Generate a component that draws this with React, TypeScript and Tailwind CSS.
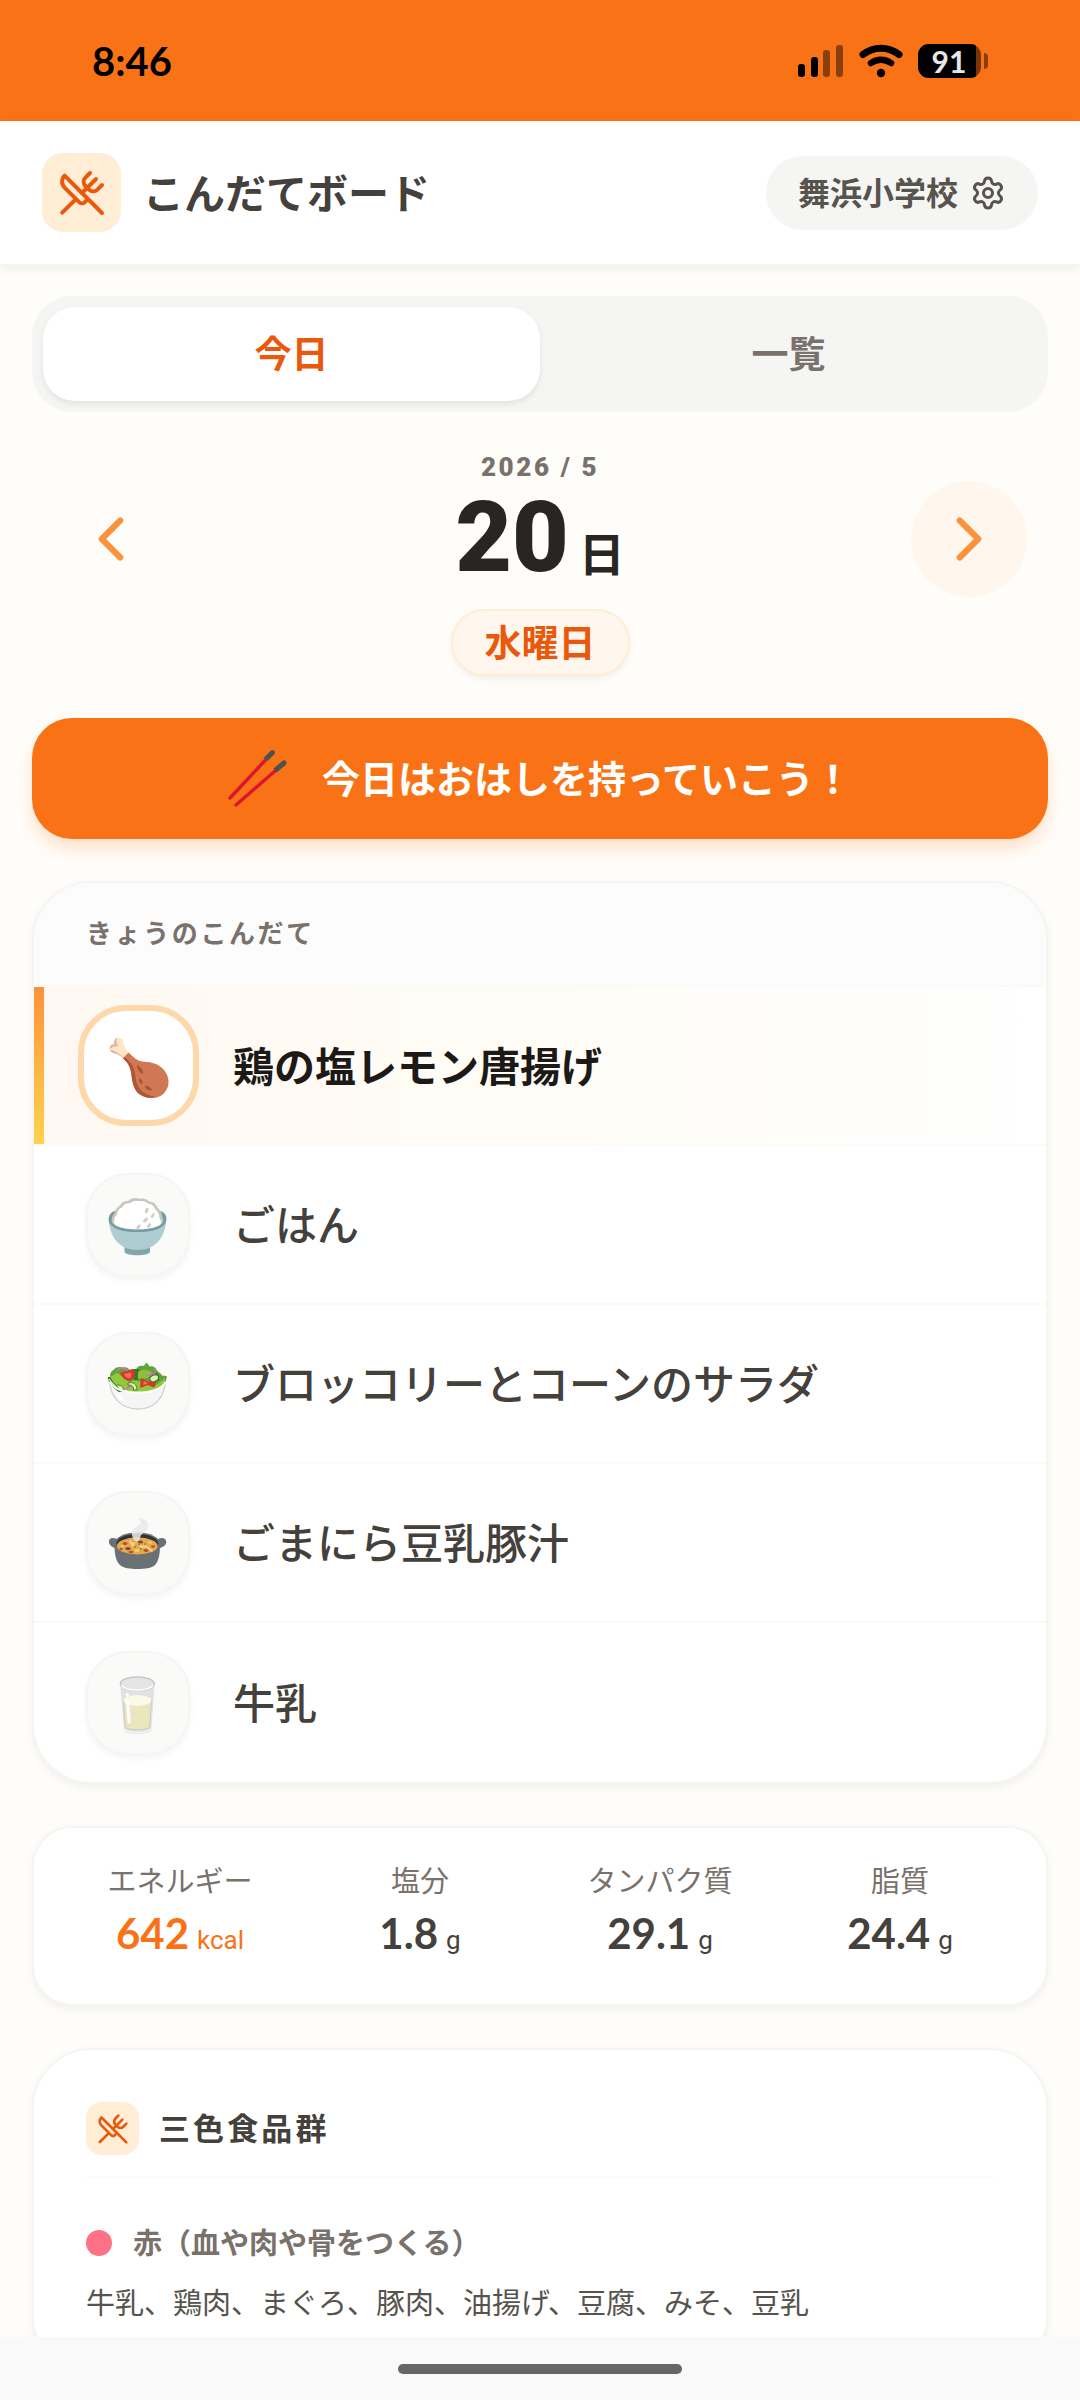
import { useState } from "react";
import type { ReactNode } from "react";
import { ChevronLeft, ChevronRight, Settings, UtensilsCrossed } from "lucide-react";

function SignalIcon() {
  return (
    <svg width="46" height="34" viewBox="0 0 46 34" aria-hidden="true">
      <rect x="0" y="20" width="7" height="13" rx="3" />
      <rect x="13" y="13" width="7" height="20" rx="3" />
      <rect x="25" y="6" width="7" height="27" rx="3" opacity="0.45" />
      <rect x="38" y="1" width="7" height="32" rx="3" opacity="0.45" />
    </svg>
  );
}

function WifiIcon() {
  return (
    <svg width="44" height="34" viewBox="0 0 44 34" fill="none" stroke="#000" strokeLinecap="round" aria-hidden="true">
      <path d="M4 10.5 C14.5 2 29.5 2 40 10.5" strokeWidth="7" />
      <path d="M12 19 C18 14.6 26 14.6 32 19" strokeWidth="6.5" />
      <circle cx="22" cy="29" r="4.2" fill="#000" stroke="none" />
    </svg>
  );
}

function StatusBar() {
  return (
    <div className="flex h-[121px] shrink-0 items-center justify-between bg-[#f97316] px-[92px] text-black">
      <span className="font-['Lato',sans-serif] text-[40px] leading-none font-bold">8:46</span>
      <div className="flex items-center gap-[15px]">
        <SignalIcon />
        <WifiIcon />
        <div className="flex items-center gap-[3px]" aria-label="バッテリー 91%">
          <div className="flex h-[34px] w-[63px] overflow-hidden rounded-[11px] bg-[#7c3508]">
            <span className="flex w-[58px] items-center justify-center bg-black pl-1 font-['Lato',sans-serif] text-[30px] leading-none font-bold text-[#e7e7e7]">
              91
            </span>
          </div>
          <div className="h-4 w-1 rounded-r-full bg-[#8a3f0c]" />
        </div>
      </div>
    </div>
  );
}

function DrumstickIcon() {
  return (
    <svg width="64" height="64" viewBox="0 0 64 64" className="overflow-visible" aria-hidden="true">
      <path
        d="M22 20 C19 15 16.5 12 16 8 C15.8 4.5 13 3.2 10.6 3.8 C8 4.5 7 7 7.4 10.4 C4.5 10 2.4 12 2.7 15 C3 18.2 6.5 19.2 9.5 20 C12.5 21 14.4 23 17 25.5 Z"
        fill="#fee6c4"
      />
      <path d="M7.4 10.4 C6.4 7 8 4.4 10.6 3.8 C8.6 6 9.6 9 11 12.3 C8 11.8 5 13 2.7 15.4 C2.4 12 4.5 10 7.4 10.4 Z M3 16 C6 16 11 17.5 17.6 25.2 C14 22.5 12.5 21 9.5 20 C6 19 3.6 18.6 3 16 Z" fill="#dcb8a4" />
      <path
        d="M21.6 18.6 C26 22.5 29 26.8 37 27.8 C45 28.2 52 30 57 36 C62.8 43 63 52 58 58 C53 64.5 43 66 35 61.5 C27 57 25.5 49 24.5 41 C23.6 33 21 28.5 16 24.5 C17.5 22.5 19.4 20.4 21.6 18.6 Z"
        fill="#d07754"
      />
      <path
        d="M17.2 23 C25 28.5 27.5 34 28.4 42 C29.4 51.5 33 60.5 49 62.7 C43 65 37 63.6 32 60 C26.5 55.5 25.3 48 24.5 41 C23.6 33 21 28.5 16 24.5 Z"
        fill="#ae5730"
      />
      <path d="M30.5 31.5 C34 33.5 35.5 36.5 35.6 39.5 C32.5 38.5 31 35.5 30.5 31.5 Z M32.5 44.5 C34.8 46 35.3 47.8 34.8 49.7 C32.8 48.8 32 46.8 32.5 44.5 Z M38 52.2 C41 52 43.6 53.5 44.4 56 C41.5 56.4 39 55 38 52.2 Z" fill="#ab5631" stroke="#ab5631" />
    </svg>
  );
}

function RiceIcon() {
  return (
    <svg width="64" height="64" viewBox="0 0 64 64" aria-hidden="true">
      <path d="M18.5 54 H44 V59 C42 63.4 20.5 63.4 18.5 59 Z" fill="#82a5ac" />
      <path d="M2.7 25 C3 41 11 57 31.5 57 C52 57 60 41 60.3 25 Z" fill="#aecdd3" />
      <path d="M2.7 26 C2.7 22 5 19 9 18 H54 C58 19 60.4 21.5 60.3 26 C60 34 50 39 31.5 39 C13 39 3 34.5 2.7 26 Z" fill="#749ba2" />
      <path
        d="M6 30 C5 26 6.5 22 8.5 20.5 C8.5 17.5 10.5 14.5 14 12.5 C15.5 9.5 19 7.4 22 8 C25 5.2 30 4 33.5 5.8 C37 4.8 41 6 43 8.4 C47 8.6 50.5 11 51.5 14.5 C54.5 17.5 55.8 20 56 23 C57.5 26 57.3 28 57 30 C50 39 13 39 6 30 Z"
        fill="#c8c7bd"
      />
      <path
        d="M8.3 31 C7.5 27 9 23 11 21.5 C11 18.5 13 15.5 16 14.5 C17.5 11.5 20.5 9.8 23.5 10.4 C26.5 8 30 7 33.5 8.3 C37 7.5 40 8.5 42 10.6 C45.5 11 48.5 13.3 49.3 16.6 C52.3 19.3 53.5 22 53.4 25 C55 27 55 29 54.8 31 C48 38 15 38 8.3 31 Z"
        fill="#fff"
      />
      <g fill="#cfcfcf">
        <ellipse cx="40.7" cy="17.5" rx="1.7" ry="3" transform="rotate(20 40.7 17.5)" />
        <ellipse cx="46.8" cy="22.5" rx="1.4" ry="2.8" transform="rotate(30 46.8 22.5)" />
        <ellipse cx="39.5" cy="27" rx="1.6" ry="3" transform="rotate(40 39.5 27)" />
        <ellipse cx="43" cy="32.5" rx="1.5" ry="2.6" transform="rotate(35 43 32.5)" />
        <ellipse cx="32.5" cy="34" rx="1.6" ry="2.8" transform="rotate(40 32.5 34)" />
      </g>
      <path d="M3.5 27 C6 35 18 37.8 31.5 37.8 C45 37.8 57 35 59.5 27" fill="none" stroke="#749ba2" strokeWidth="2" />
    </svg>
  );
}

function SaladIcon() {
  return (
    <svg width="64" height="64" viewBox="0 0 64 64" aria-hidden="true">
      <path d="M3.5 28 C4 45 15 57 32 57 C49 57 59 45 59.5 28 Z" fill="#f5f5f5" stroke="#d0d0d0" strokeWidth="1.3" />
      <path
        d="M4 25 C4 21 5 19 7.5 18 C9 15.5 13 14 17 15.5 C20 14.5 22 16 24 18 L30 17.5 C31 14.5 34 13 37.5 14 L40.8 10.5 L43.5 14.5 C47 13.5 50 15.5 51 18.5 C53 21 55 21 56 23.5 L60.8 24 C61 27.5 59 30 57 32.5 C50 40.5 19 43 6 30.5 L1.5 26 Z"
        fill="#62a43a"
      />
      <path d="M4 25 L11 21 L18 25 L23 30 L30 28 L38 32 L48 35 L59 26 C59 31 56 35 50 37.5 C38 42.5 17 41 7 31 Z" fill="#91c93b" />
      <path d="M24 18 C30 16 36 17 37 22 C37 27 32 29 28 28 Z M48 19 C53 21 54 25 53 29 L47 28 Z" fill="#337b27" />
      <path d="M32 20 C36 17 42 17 46 21 L42 26 L32 27 Z" fill="#8cc23b" />
      <path d="M2 25 C2 31 7 36 13 40 L18 39 C12 35 7 31 4 25 Z" fill="#31742c" />
      <path d="M3 27 C5 31 9 34 13 37" fill="none" stroke="#e7f2c2" strokeWidth="1.4" />
      <path d="M14 21 L27 17 C30 21 29 27 24 29 C20 29 16 26 14 21 Z" fill="#dc3428" />
      <path d="M18 22 L25 20.5 C26 24 25 26 23 26.5 C21 26 19 24.5 18 22 Z" fill="#f4715d" />
      <path d="M35 26 L43 30 L51 29 L48 35.5 L42 33 L34 36 Z" fill="#dc3428" />
      <path d="M38 29 L42 31.5 L37 33 Z" fill="#f4715d" />
      <path d="M12 17.5 C15 15.5 19 15.5 21 18 M41 23 C46 24.5 50 21 49.5 18 M21 37 C22 33.5 26 33 29 35.5" fill="none" stroke="#c976ae" strokeWidth="1.8" strokeLinecap="round" />
      <ellipse cx="48.2" cy="26.3" rx="4.6" ry="3.3" transform="rotate(-25 48.2 26.3)" fill="#e3efb4" stroke="#31742c" strokeWidth="1.2" />
      <path d="M22 31 C27 29.5 31 32 31 38 L27.5 38 C28 35 26 33 22 33 Z" fill="#e3efb4" stroke="#31742c" strokeWidth="0.9" />
      <path d="M10 33.5 C14 32 18 35 18 38.5 L14 38 Z" fill="#e3efb4" stroke="#31742c" strokeWidth="0.9" />
      <path d="M3.5 30 C8 37 19 40.5 32 40.5 C45 40.5 56 37 59.5 30" fill="none" stroke="#fff" strokeWidth="1.8" />
      <path d="M10 41 C11 45 14 48 18.5 49.5 C18 46 15 43 10 41 Z" fill="#fff" />
    </svg>
  );
}

function PotIcon() {
  return (
    <svg width="64" height="64" viewBox="0 0 64 64" aria-hidden="true">
      <path d="M11 28 C6 26 3.5 27 3 30 C2.5 33 5 36 11 38 Z M52 28 C57 26 60 27.5 60.3 31 C60.5 34 57 36 52 38 Z" fill="#697174" />
      <path d="M8.5 33 C8.5 43 9.5 50 14.5 54.5 C20 59.3 43 59.3 48.5 54.5 C53 50 54 43 54 33 Z" fill="#697174" />
      <ellipse cx="31.3" cy="32.5" rx="22.7" ry="11" fill="#697174" />
      <ellipse cx="31.3" cy="32.8" rx="21" ry="9.8" fill="#303436" />
      <ellipse cx="31.3" cy="35" rx="20.4" ry="8.4" fill="#e9a750" />
      <g fill="#b9532a">
        <ellipse cx="19" cy="32.5" rx="2.6" ry="1.5" />
        <ellipse cx="40" cy="39.5" rx="2.6" ry="1.4" />
        <ellipse cx="47" cy="35.5" rx="2" ry="1.3" />
        <ellipse cx="25" cy="41" rx="2.4" ry="1.2" />
        <ellipse cx="15" cy="38" rx="1.6" ry="1.2" />
      </g>
      <g fill="#7a4b32">
        <ellipse cx="22" cy="37.6" rx="2.8" ry="1.7" />
        <ellipse cx="34.5" cy="31" rx="2.6" ry="1.6" />
      </g>
      <g fill="#f4d25f">
        <ellipse cx="27" cy="32.5" rx="2.4" ry="1.3" />
        <ellipse cx="38" cy="35.5" rx="2.6" ry="1.4" />
        <ellipse cx="31" cy="39.5" rx="2.6" ry="1.4" />
        <ellipse cx="44" cy="31.5" rx="2" ry="1.2" />
        <ellipse cx="16.5" cy="35" rx="1.7" ry="1.1" />
      </g>
      <path d="M24 30 L27 35 M41 36 L46 40 M33 34 L36 36.5" stroke="#f9e1b5" strokeWidth="1.4" strokeLinecap="round" />
      <g fill="#76913a">
        <circle cx="29" cy="36" r="1" />
        <circle cx="35" cy="38" r="1" />
        <circle cx="39" cy="33" r="0.9" />
        <circle cx="33" cy="33.4" r="1" />
      </g>
      <path
        d="M31 8 C36 6.2 42.5 8.5 42.2 14.5 C42 21 35 22 34.3 26 C34 28.5 32 30.5 30 30.5 C26.5 28 24.4 22.5 27 18.5 C29.5 15.5 35 14.5 34.8 11.3 C34.6 9.4 33 8.6 31 8 Z"
        fill="#e9e9e9"
        opacity="0.86"
      />
    </svg>
  );
}

function MilkIcon() {
  return (
    <svg width="64" height="64" viewBox="0 0 64 64" aria-hidden="true">
      <path d="M14 12 L18 59 C19 64.5 44 64.5 45.3 59 L48.7 12 Z" fill="#e2e2e3" />
      <path d="M17.4 29 L19.4 56 C21 59.8 42 59.8 43.5 56 L45.5 29 Z" fill="#ece6bf" stroke="#c4c3ba" strokeWidth="0.8" />
      <ellipse cx="31.4" cy="29.5" rx="14" ry="5.4" fill="#fbf9e8" />
      <ellipse cx="31.3" cy="12.7" rx="17" ry="6.9" fill="#e4e4e5" stroke="#c2c2c3" strokeWidth="1.2" />
      <path d="M15.5 14.5 C20 20.5 42 20.5 47 14.5" fill="none" stroke="#fff" strokeWidth="1.4" />
      <circle cx="21.3" cy="24" r="1.7" fill="#fff" />
      <path d="M21.5 31 L23.2 51" stroke="#fff" strokeWidth="3" strokeLinecap="round" />
      <path d="M18.7 58.5 C23 62.5 40 62.5 44.5 58.5" fill="none" stroke="#f5f5f5" strokeWidth="1.4" />
    </svg>
  );
}

function ChopsticksIcon() {
  return (
    <svg width="60" height="60" viewBox="0 0 60 60" fill="none" strokeLinecap="round" aria-hidden="true">
      <path d="M2 49 L37 11.5" stroke="#dd1430" strokeWidth="3.4" />
      <path d="M8 56 L47 22" stroke="#dd1430" strokeWidth="3.4" />
      <path d="M37.5 10.5 L44.5 3.5 M47 21.5 L56 14" stroke="#4d4f50" strokeWidth="5" strokeLinecap="butt" />
      <path d="M44 4 L44.6 3.4 M55.6 14.4 L56.2 13.8" stroke="#4d4f50" strokeWidth="4.6" />
    </svg>
  );
}

type Dish = { name: string; icon: ReactNode; main?: boolean };

const dishes: Dish[] = [
  { name: "鶏の塩レモン唐揚げ", icon: <DrumstickIcon />, main: true },
  { name: "ごはん", icon: <RiceIcon /> },
  { name: "ブロッコリーとコーンのサラダ", icon: <SaladIcon /> },
  { name: "ごまにら豆乳豚汁", icon: <PotIcon /> },
  { name: "牛乳", icon: <MilkIcon /> },
];

const nutrients = [
  { label: "エネルギー", value: "642", unit: "kcal", accent: true },
  { label: "塩分", value: "1.8", unit: "g" },
  { label: "タンパク質", value: "29.1", unit: "g" },
  { label: "脂質", value: "24.4", unit: "g" },
];

function DishRow({ dish }: { dish: Dish }) {
  if (dish.main) {
    return (
      <li className="flex h-[159px] items-stretch border-b-2 border-stone-50 bg-linear-to-r from-[#fff8f2] via-[#fffcf6] to-white">
        <span className="w-[10px] shrink-0 bg-linear-to-b from-[#fb923c] to-[#fdd34d]" />
        <span className="ml-[34px] flex size-[121px] shrink-0 items-center justify-center self-center rounded-[48px] border-[6px] border-[#fed7aa] bg-white">
          {dish.icon}
        </span>
        <span className="ml-[34px] self-center pb-1 text-[41px] leading-[56px] font-bold text-stone-900">{dish.name}</span>
      </li>
    );
  }
  return (
    <li className="flex h-[159px] items-center border-b-2 border-stone-50 pl-[52px] last:border-b-0">
      <span className="flex size-[104px] shrink-0 items-center justify-center rounded-[42px] border-2 border-stone-100 bg-stone-50 shadow-[0_3px_6px_rgba(0,0,0,0.05)]">
        {dish.icon}
      </span>
      <span className="ml-[43px] pb-1 text-[42px] leading-[56px] font-medium text-stone-700">{dish.name}</span>
    </li>
  );
}

export default function App() {
  const [tab, setTab] = useState<"today" | "list">("today");
  const active = "bg-white text-[#ea580c] shadow-[0_3px_6px_rgba(0,0,0,0.08)]";
  const idle = "text-stone-500";

  return (
    <div className="flex h-screen flex-col overflow-hidden bg-[#fffdf9] font-['Noto_Sans_CJK_JP',sans-serif]">
      <StatusBar />
      <header className="z-10 flex shrink-0 items-center justify-between border-b-2 border-stone-100 bg-white px-[42px] py-8 shadow-[0_3px_8px_rgba(0,0,0,0.06)]">
        <div className="flex items-center gap-[22px]">
          <span className="flex size-[79px] items-center justify-center rounded-[21px] bg-[#ffedd5] text-[#ea580c]">
            <UtensilsCrossed size={48} />
          </span>
          <h1 className="pb-1 text-[41px] leading-[56px] font-bold text-stone-700">こんだてボード</h1>
        </div>
        <button type="button" className="flex h-[74px] items-center gap-3 rounded-full bg-stone-100 px-8 text-stone-600">
          <span className="pb-1 text-[32px] leading-[40px] font-bold">舞浜小学校</span>
          <Settings size={36} />
        </button>
      </header>

      <main className="min-h-0 flex-1 overflow-hidden px-8 pt-[30px]">
        <div role="tablist" className="grid h-[116px] grid-cols-2 rounded-[40px] bg-stone-100 p-[11px]">
          <button
            type="button"
            role="tab"
            aria-selected={tab === "today"}
            onClick={() => setTab("today")}
            className={`rounded-[32px] pb-1 text-[37px] leading-[48px] font-bold ${tab === "today" ? active : idle}`}
          >
            今日
          </button>
          <button
            type="button"
            role="tab"
            aria-selected={tab === "list"}
            onClick={() => setTab("list")}
            className={`rounded-[32px] pb-1 text-[37px] leading-[48px] font-bold ${tab === "list" ? active : idle}`}
          >
            一覧
          </button>
        </div>

        <section className="mt-8 flex items-start justify-between px-[21px]">
          <button type="button" aria-label="前の日" className="mt-[37px] flex size-[116px] items-center justify-center rounded-full text-[#fb923c]">
            <ChevronLeft size={74} />
          </button>
          <div className="flex flex-col items-center">
            <p className="font-['Roboto',sans-serif] text-[26px] leading-[46px] font-black tracking-widest text-stone-500">2026 / 5</p>
            <p className="flex h-24 items-baseline gap-[10px] text-stone-800">
              <span className="font-['Roboto',sans-serif] text-[98px] leading-[96px] font-black">20</span>
              <span className="text-[46px] leading-none font-bold">日</span>
            </p>
            <p className="mt-[23px] flex h-[67px] items-center rounded-full border-2 border-[#ffedd5] bg-[#fff7ed] px-8 pb-1 text-[37px] leading-[48px] font-bold text-[#ea580c] shadow-[0_3px_6px_rgba(0,0,0,0.06)]">
              水曜日
            </p>
          </div>
          <button type="button" aria-label="次の日" className="mt-[37px] flex size-[116px] items-center justify-center rounded-full bg-[#fff7ed] text-[#fb923c]">
            <ChevronRight size={74} />
          </button>
        </section>

        <section className="mt-[42px] flex h-[121px] items-center justify-center gap-[34px] rounded-[40px] bg-[#f97316] shadow-[0_10px_16px_rgba(249,115,22,0.2)]">
          <ChopsticksIcon />
          <p className="pb-1 text-[38px] leading-[48px] font-bold text-white">今日はおはしを持っていこう！</p>
        </section>

        <section className="mt-[42px] overflow-hidden rounded-[60px] border-2 border-stone-100 bg-white shadow-[0_3px_8px_rgba(0,0,0,0.06)]">
          <h2 className="border-b-2 border-stone-50 bg-[#fcfcfc] px-[52px] pt-[30px] pb-[34px] text-[26px] leading-[38px] font-bold tracking-widest text-stone-500">
            きょうのこんだて
          </h2>
          <ul>
            {dishes.map((dish) => (
              <DishRow key={dish.name} dish={dish} />
            ))}
          </ul>
        </section>

        <dl className="mt-[42px] grid grid-cols-4 rounded-[40px] border-2 border-stone-100 bg-white px-[26px] pt-[30px] pb-[42px] shadow-[0_3px_8px_rgba(0,0,0,0.06)]">
          {nutrients.map((n) => (
            <div key={n.label} className="flex flex-col items-center gap-1">
              <dt className="text-[29px] leading-[42px] text-stone-500">{n.label}</dt>
              <dd className={`flex h-[58px] items-baseline gap-2 ${n.accent ? "text-[#f97316]" : "text-stone-700"}`}>
                <span className="font-['Lato',sans-serif] text-[42px] leading-[58px] font-bold">{n.value}</span>
                <span className="font-['Roboto',sans-serif] text-[26px] leading-none">{n.unit}</span>
              </dd>
            </div>
          ))}
        </dl>

        <section className="mt-[42px] rounded-[60px] border-2 border-stone-100 bg-white px-[52px] py-[52px] shadow-[0_3px_8px_rgba(0,0,0,0.06)]">
          <div className="flex items-center gap-5 border-b-2 border-stone-50 pb-[21px]">
            <span className="flex size-[53px] items-center justify-center rounded-2xl bg-[#ffedd5] text-[#ea580c]">
              <UtensilsCrossed size={32} />
            </span>
            <h2 className="pb-1 text-[31px] leading-[48px] font-bold tracking-widest text-stone-700">三色食品群</h2>
          </div>
          <div className="mt-[42px] flex items-center gap-[21px]">
            <span className="size-[26px] rounded-full bg-[#ff7186]" />
            <h3 className="pb-1 text-[29px] leading-[42px] font-bold text-stone-500">赤（血や肉や骨をつくる）</h3>
          </div>
          <p className="mt-[14px] text-[29px] leading-[42px] text-stone-600">
            牛乳、鶏肉、まぐろ、豚肉、油揚げ、豆腐、みそ、豆乳
          </p>
        </section>
      </main>

      <div className="z-10 flex h-[63px] shrink-0 items-center justify-center bg-[#f9f9f9]">
        <div className="h-[10px] w-[284px] rounded-full bg-[#666]" />
      </div>
    </div>
  );
}
